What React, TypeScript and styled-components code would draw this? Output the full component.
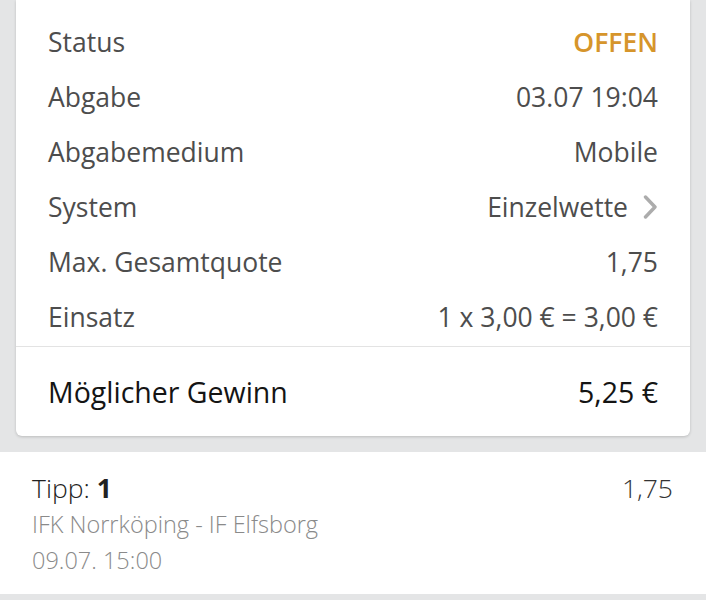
import React from "react";
import styled, { createGlobalStyle } from "styled-components";

const Global = createGlobalStyle`
  html, body { margin: 0; padding: 0; }
  body {
    background: #e4e5e6;
    font-family: "Open Sans", "Noto Sans", sans-serif;
    -webkit-font-smoothing: antialiased;
  }
`;

const Page = styled.div`
  display: flex;
  flex-direction: column;
  gap: 16px;
  width: 706px;
`;

const Card = styled.section`
  margin: 0 16px;
  background: #fff;
  border-radius: 0 0 6px 6px;
  box-shadow: 0 1px 3px rgba(0, 0, 0, 0.18);
  padding-top: 14px;
`;

const Rows = styled.div`
  display: flex;
  flex-direction: column;
  padding: 0 32px 2px;
  border-bottom: 1px solid #e3e3e3;
`;

const Row = styled.div`
  display: flex;
  justify-content: space-between;
  align-items: center;
  height: 55px;
  font-size: 26.5px;
  color: #4d4d4d;
`;

const Value = styled.span<{ $accent?: boolean }>`
  display: flex;
  align-items: center;
  gap: 15px;
  color: ${(p) => (p.$accent ? "#d6952b" : "#4d4d4d")};
  font-weight: ${(p) => (p.$accent ? 600 : 400)};
`;

const Total = styled.div`
  display: flex;
  justify-content: space-between;
  align-items: center;
  height: 89px;
  padding: 0 32px;
  font-size: 28.5px;
  color: #141414;
`;

const Tip = styled.section`
  background: #fff;
  display: flex;
  justify-content: space-between;
  align-items: flex-start;
  padding: 19px 33px 16px 32px;
`;

const TipInfo = styled.div`
  display: flex;
  flex-direction: column;
`;

const TipLine = styled.div<{ $muted?: boolean }>`
  font-size: ${(p) => (p.$muted ? "23.5px" : "26.5px")};
  line-height: ${(p) => (p.$muted ? "36px" : "35px")};
  font-weight: 300;
  color: ${(p) => (p.$muted ? "#8a8a8a" : "#222")};
  b { font-weight: 700; }
`;

const TipOdds = styled.div`
  font-size: 26.5px;
  line-height: 35px;
  font-weight: 300;
  color: #333;
`;

const Chevron = () => (
  <svg width="15" height="24" viewBox="0 0 15 24" fill="none">
    <polyline points="2.5,2 12,12 2.5,22" stroke="#acacac" strokeWidth="3.4" strokeLinecap="round" strokeLinejoin="round" />
  </svg>
);

const rows: { label: string; value: string; accent?: boolean; chevron?: boolean }[] = [
  { label: "Status", value: "OFFEN", accent: true },
  { label: "Abgabe", value: "03.07 19:04" },
  { label: "Abgabemedium", value: "Mobile" },
  { label: "System", value: "Einzelwette", chevron: true },
  { label: "Max. Gesamtquote", value: "1,75" },
  { label: "Einsatz", value: "1 x 3,00 € = 3,00 €" },
];

export default function App() {
  return (
    <>
      <Global />
      <Page>
        <Card>
          <Rows>
            {rows.map((r) => (
              <Row key={r.label}>
                <span>{r.label}</span>
                <Value $accent={r.accent}>
                  {r.value}
                  {r.chevron && <Chevron />}
                </Value>
              </Row>
            ))}
          </Rows>
          <Total>
            <span>Möglicher Gewinn</span>
            <span>5,25 €</span>
          </Total>
        </Card>
        <Tip>
          <TipInfo>
            <TipLine>
              Tipp: <b>1</b>
            </TipLine>
            <TipLine $muted>IFK Norrköping - IF Elfsborg</TipLine>
            <TipLine $muted>09.07. 15:00</TipLine>
          </TipInfo>
          <TipOdds>1,75</TipOdds>
        </Tip>
      </Page>
    </>
  );
}
